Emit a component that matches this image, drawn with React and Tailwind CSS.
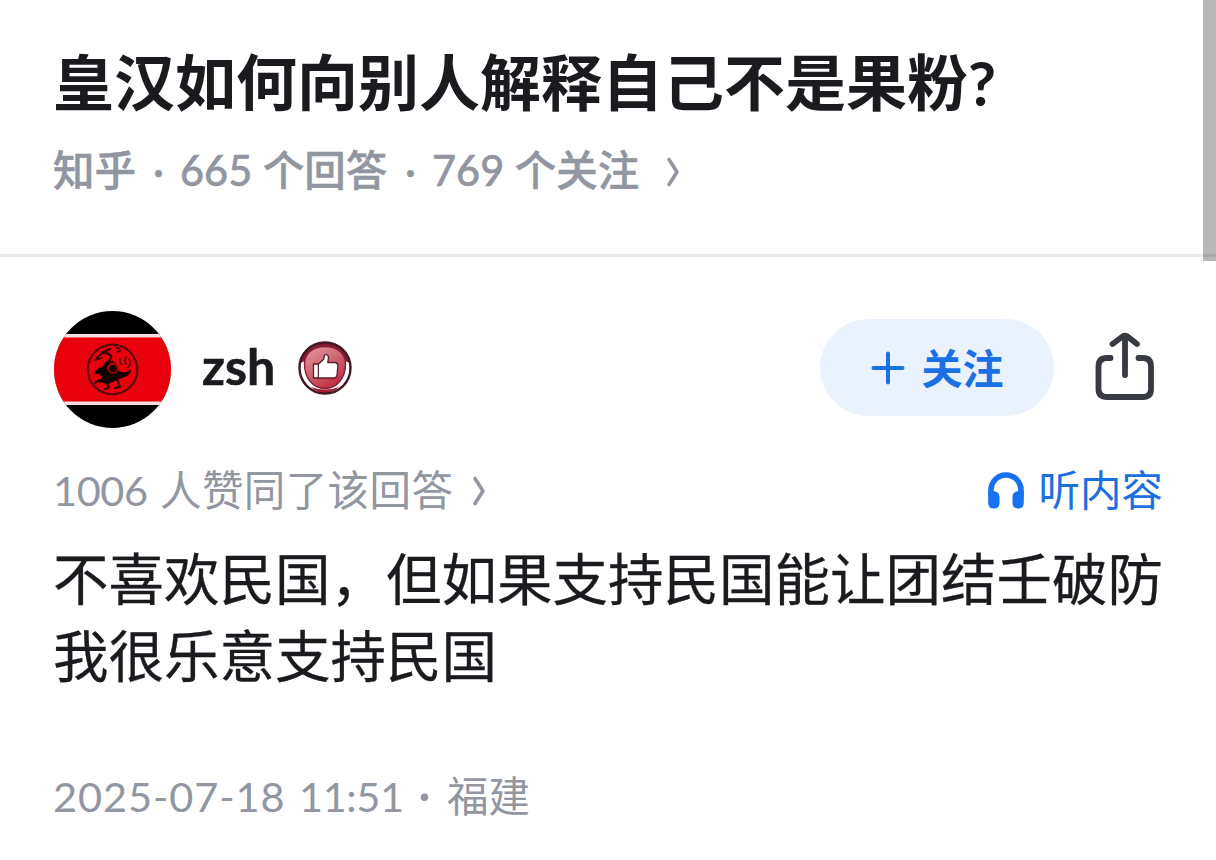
import React from "react";

const fontStack = "font-[Lato,'Noto_Sans_CJK_SC',sans-serif]";

function Chevron({ className }) {
  return (
    <svg className={className} viewBox="0 0 14 30" fill="none" stroke="currentColor">
      <path d="M3 2.5 L11 15 L3 27.5" strokeWidth="3.6" strokeLinecap="round" strokeLinejoin="round" />
    </svg>
  );
}

function Avatar() {
  return (
    <svg className="h-[118px] w-[118px] shrink-0" viewBox="0 0 118 118">
      <defs>
        <clipPath id="avatar-clip">
          <circle cx="59.5" cy="59.5" r="58.5" />
        </clipPath>
      </defs>
      <g clipPath="url(#avatar-clip)">
        <rect width="118" height="118" fill="#000" />
        <rect y="24" width="118" height="71" fill="#f6dfe0" />
        <rect y="27.5" width="118" height="64" fill="#ea000c" />
      </g>
      {/* dragon roundel */}
      <circle cx="59.5" cy="59.5" r="24.8" fill="none" stroke="#5a060a" strokeWidth="2.2" />
      <g fill="none" stroke="#3a0407" strokeLinecap="round" strokeLinejoin="round">
        <path d="M44 48 L49 43 L54 43 L58 46 L57 50 L52 54 L49 59 M50 42 L57 39" strokeWidth="2.4" />
        <path d="M42 50 L49 48" strokeWidth="1.6" />
        <path d="M63 38 Q67 38 67 41 L64 42 M67 48 Q66 52 69 55 M73 47 Q71 51 73 54 M76 49 Q79 54 75 57" strokeWidth="1.4" />
        <path d="M68 66 Q75 66 77 61" strokeWidth="2.4" />
        <path d="M46 70 L42 73 M54 73 L56 78 L51 79 M64 69 L67 77 L62 78" strokeWidth="2.2" />
      </g>
      <path d="M41 64 Q43 58 50 57 Q54 51 60 51 Q65 53 65 60 Q69 64 75 61 L74 66 L66 69 Q58 73 55 74 L45 72 Q49 69 49 66 Q45 63 41 64Z" fill="#120102" />
      <circle cx="60" cy="58" r="5.8" fill="#b5040c" />
      <circle cx="60" cy="58.5" r="3.8" fill="#180203" />
    </svg>
  );
}

function LikeBadge() {
  return (
    <svg className="mb-[2px] h-[54px] w-[54px] shrink-0" viewBox="0 0 54 54">
      <defs>
        <linearGradient id="badge-fill" x1="0.2" y1="0" x2="0.8" y2="1">
          <stop offset="0" stopColor="#e0939d" />
          <stop offset="0.5" stopColor="#cf5f6e" />
          <stop offset="1" stopColor="#c02238" />
        </linearGradient>
      </defs>
      <circle cx="27" cy="27" r="25.5" fill="#fff" />
      <path d="M2 22 A25.5 25.5 0 0 1 52 22 L47 20 H7Z" fill="#8c1c30" />
      <path d="M13 46 Q27 51 41 46 Q35 52 27 52 Q19 52 13 46Z" fill="#a51f34" />
      <path d="M27 5.5 C40 5.5 47.5 13 47.5 23 C47.5 37 39 47.5 27 47.5 C15 47.5 6.5 37 6.5 23 C6.5 13 14 5.5 27 5.5Z" fill="url(#badge-fill)" stroke="#80203a" strokeWidth="1.4" />
      <circle cx="27" cy="27" r="25.5" fill="none" stroke="#421820" strokeWidth="2.4" />
      <path
        d="M15.5 23 H20.5 L25.5 18.5 L26.5 14 Q29.5 12.5 30.5 16 L29.8 21.5 H37.5 Q40 22 39.9 25 L39 34 Q38.5 37 36 37 H15.5Z"
        fill="#fff"
        stroke="#54202a"
        strokeWidth="1.3"
        strokeLinejoin="round"
      />
      <path d="M20.3 23 V37" stroke="#54202a" strokeWidth="1.2" />
    </svg>
  );
}

function ShareIcon() {
  return (
    <svg className="h-[70px] w-[60px]" viewBox="0 0 60 70" fill="none" stroke="#383a42" strokeWidth="5.8" strokeLinecap="round" strokeLinejoin="round">
      <path d="M15.5 26 H12 Q3.5 26 3.5 34.5 V57 Q3.5 65 12 65 H48 Q56 65 56 57 V34.5 Q56 26 48 26 H43.5" />
      <path d="M30 43 V4.5 M17.5 12 L27.5 4.5 Q30 3 32.5 4.5 L42 12" />
    </svg>
  );
}

function HeadphoneIcon() {
  return (
    <svg className="h-[38px] w-[38px]" viewBox="0 0 38 38">
      <path d="M4 26 V19 A15 15 0 0 1 34 19 V26" fill="none" stroke="#1772f0" strokeWidth="5.6" />
      <path d="M1.2 20 H6 Q12.5 20.5 12.5 26 V32 Q12.5 37.5 6.8 37.5 Q1.2 37.5 1.2 32Z" fill="#1772f0" />
      <path d="M36.8 20 H32 Q25.5 20.5 25.5 26 V32 Q25.5 37.5 31.2 37.5 Q36.8 37.5 36.8 32Z" fill="#1772f0" />
    </svg>
  );
}

export default function App() {
  return (
    <div className={`${fontStack} relative h-[860px] w-[1216px] overflow-hidden bg-white text-[#191b1f]`}>
      {/* Question header */}
      <header className="h-[257px] border-b-[3px] border-[#ebebeb] pl-[53px] pt-[43px]">
        <h1 className="h-[80px] whitespace-nowrap text-[61px] font-bold leading-[80px]">
          皇汉如何向别人解释自己不是果粉?
        </h1>
        <div className="mt-[17px] flex h-[60px] items-center whitespace-nowrap text-[41.5px] font-medium leading-[60px] text-[#9196a1] [-webkit-text-stroke:0.5px_#9196a1]">
          <span className="w-[100px]">知乎</span>
          <span className="w-[27px]">·</span>
          <span className="w-[225px]">665 个回答</span>
          <span className="w-[27px]">·</span>
          <span className="w-[234px]">769 个关注</span>
          <Chevron className="mt-[3px] h-[30px] w-[14px]" />
        </div>
      </header>

      <main className="pl-[53px] pr-[53px]">
        {/* Author row */}
        <div className="mt-[53px] flex h-[118px] items-center">
          <Avatar />
          <span className="mb-[7px] ml-[31px] w-[96px] text-[50px] font-bold leading-[60px] [-webkit-text-stroke:0.6px_#191b1f]">
            zsh
          </span>
          <LikeBadge />
          <button className="mb-[4px] ml-auto flex h-[97px] w-[234px] items-center justify-center rounded-full bg-[#eaf2fd] text-[#1b70e6]">
            <svg className="mr-[17px] mt-[1px] h-[34px] w-[34px]" viewBox="0 0 34 34" stroke="currentColor" strokeWidth="4" strokeLinecap="round">
              <path d="M17 2.5 V31.5 M2.5 17 H31.5" />
            </svg>
            <span className="mt-[3px] text-[41px] font-bold leading-[60px]">关注</span>
          </button>
          <button className="mb-[4px] ml-[41px] mr-[8px]">
            <ShareIcon />
          </button>
        </div>

        {/* Votes + listen */}
        <div className="mt-[32px] flex h-[60px] items-center whitespace-nowrap text-[41.5px] leading-[60px] text-[#9196a1]">
          <span className="w-[107px] tracking-[-0.4px]">1006</span>
          <span className="w-[312px] tracking-[0.4px]">人赞同了该回答</span>
          <Chevron className="mt-[1px] h-[30px] w-[14px]" />
          <div className="ml-auto flex items-center text-[#1b70e0]">
            <HeadphoneIcon />
            <span className="ml-[13px]">听内容</span>
          </div>
        </div>

        <p className="mt-[20px] whitespace-nowrap text-[55.5px] leading-[77px] [-webkit-text-stroke:0.3px_#191b1f]">
          不喜欢民国，但如果支持民国能让团结壬破防
          <br />
          我很乐意支持民国
        </p>

        <div className="mt-[72px] flex h-[60px] items-center whitespace-nowrap text-[41.5px] leading-[60px] text-[#9196a1]">
          <span className="w-[246px] tracking-[0.9px]">2025-07-18</span>
          <span className="w-[119px] tracking-[-0.4px]">11:51</span>
          <span className="mb-[6px] w-[29px] text-[50px]">·</span>
          <span>福建</span>
        </div>
      </main>

      {/* Scrollbar thumb over the page edge */}
      <div className="absolute right-0 top-0 h-[261px] w-[13px] bg-black/28" />
    </div>
  );
}
